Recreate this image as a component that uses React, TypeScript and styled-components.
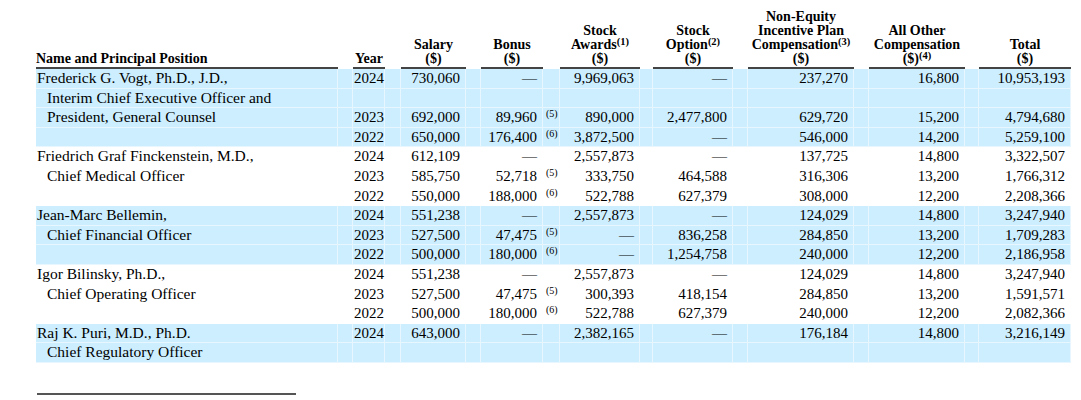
import React from 'react';
import styled, { createGlobalStyle } from 'styled-components';

const GlobalStyle = createGlobalStyle`
  html, body {
    margin: 0;
    padding: 0;
    background: #ffffff;
  }
  body {
    font-family: "Liberation Serif", "Times New Roman", serif;
    color: #000;
  }
`;

const Page = styled.div`
  padding: 10px 0 0 36px;
  width: 1035px;
  font-family: "Liberation Serif", "Times New Roman", serif;
`;

const Table = styled.table`
  width: 1035px;
  table-layout: fixed;
  border-collapse: separate;
  border-spacing: 0;
  font-family: "Liberation Serif", "Times New Roman", serif;
  font-size: 15px;
  line-height: 18.6px;
  color: #000;
`;

const HeadCell = styled.th<{ $left?: boolean; $rule?: boolean }>`
  font-family: "Liberation Serif", "Times New Roman", serif;
  font-size: 14px;
  line-height: 14px;
  font-weight: bold;
  text-align: ${p => (p.$left ? 'left' : 'center')};
  vertical-align: bottom;
  padding: 0 0 1px 0;
  border-bottom: 2px solid ${p => (p.$rule ? '#444' : 'transparent')};
  white-space: nowrap;
`;

const Sup = styled.span`
  font-size: 10.5px;
  line-height: 0;
  position: relative;
  top: -4px;
`;

const Row = styled.tr<{ $shade?: boolean }>`
  background: ${p => (p.$shade ? '#cceeff' : '#ffffff')};
`;

const Cell = styled.td<{ $align?: 'left' | 'right' | 'center'; $indent?: boolean }>`
  box-sizing: border-box;
  height: 19.6px;
  font-family: "Liberation Serif", "Times New Roman", serif;
  font-size: 15px;
  line-height: 18.6px;
  padding: 0 ${p => (p.$align === 'right' ? '5px' : '0')} 0 ${p => (p.$indent ? '11px' : '1px')};
  text-align: ${p => p.$align || 'left'};
  vertical-align: middle;
  border-right: 1px solid rgba(255, 255, 255, 0.55);
  border-bottom: 1px solid rgba(255, 255, 255, 0.55);
  white-space: nowrap;
  overflow: visible;
`;

const NameCell = styled(Cell)`
  font-size: 15.5px;
`;

const Note = styled.span`
  font-size: 10px;
  line-height: 0;
  position: relative;
  top: -5px;
  padding-left: 2px;
`;

const FootRule = styled.div`
  margin-top: 30px;
  width: 259px;
  height: 2px;
  background: #555;
  margin-left: 1px;
`;

const widths = [302, 15, 32, 16, 65, 15, 62, 17, 80, 13, 80, 15, 106, 15, 96, 14, 92];

type Line = {
  label?: string;
  indent?: boolean;
  year?: string;
  salary?: string;
  bonus?: string;
  note?: string;
  awards?: string;
  option?: string;
  nonEq?: string;
  other?: string;
  total?: string;
};

type Person = { shade: boolean; lines: Line[] };

const people: Person[] = [
  {
    shade: true,
    lines: [
      { label: 'Frederick G. Vogt, Ph.D., J.D.,', year: '2024', salary: '730,060', bonus: '—', awards: '9,969,063', option: '—', nonEq: '237,270', other: '16,800', total: '10,953,193' },
      { label: 'Interim Chief Executive Officer and', indent: true },
      { label: 'President, General Counsel', indent: true, year: '2023', salary: '692,000', bonus: '89,960', note: '(5)', awards: '890,000', option: '2,477,800', nonEq: '629,720', other: '15,200', total: '4,794,680' },
      { year: '2022', salary: '650,000', bonus: '176,400', note: '(6)', awards: '3,872,500', option: '—', nonEq: '546,000', other: '14,200', total: '5,259,100' },
    ],
  },
  {
    shade: false,
    lines: [
      { label: 'Friedrich Graf Finckenstein, M.D.,', year: '2024', salary: '612,109', bonus: '—', awards: '2,557,873', option: '—', nonEq: '137,725', other: '14,800', total: '3,322,507' },
      { label: 'Chief Medical Officer', indent: true, year: '2023', salary: '585,750', bonus: '52,718', note: '(5)', awards: '333,750', option: '464,588', nonEq: '316,306', other: '13,200', total: '1,766,312' },
      { year: '2022', salary: '550,000', bonus: '188,000', note: '(6)', awards: '522,788', option: '627,379', nonEq: '308,000', other: '12,200', total: '2,208,366' },
    ],
  },
  {
    shade: true,
    lines: [
      { label: 'Jean-Marc Bellemin,', year: '2024', salary: '551,238', bonus: '—', awards: '2,557,873', option: '—', nonEq: '124,029', other: '14,800', total: '3,247,940' },
      { label: 'Chief Financial Officer', indent: true, year: '2023', salary: '527,500', bonus: '47,475', note: '(5)', awards: '—', option: '836,258', nonEq: '284,850', other: '13,200', total: '1,709,283' },
      { year: '2022', salary: '500,000', bonus: '180,000', note: '(6)', awards: '—', option: '1,254,758', nonEq: '240,000', other: '12,200', total: '2,186,958' },
    ],
  },
  {
    shade: false,
    lines: [
      { label: 'Igor Bilinsky, Ph.D.,', year: '2024', salary: '551,238', bonus: '—', awards: '2,557,873', option: '—', nonEq: '124,029', other: '14,800', total: '3,247,940' },
      { label: 'Chief Operating Officer', indent: true, year: '2023', salary: '527,500', bonus: '47,475', note: '(5)', awards: '300,393', option: '418,154', nonEq: '284,850', other: '13,200', total: '1,591,571' },
      { year: '2022', salary: '500,000', bonus: '180,000', note: '(6)', awards: '522,788', option: '627,379', nonEq: '240,000', other: '12,200', total: '2,082,366' },
    ],
  },
  {
    shade: true,
    lines: [
      { label: 'Raj K. Puri, M.D., Ph.D.', year: '2024', salary: '643,000', bonus: '—', awards: '2,382,165', option: '—', nonEq: '176,184', other: '14,800', total: '3,216,149' },
      { label: 'Chief Regulatory Officer', indent: true },
    ],
  },
];

const App: React.FC = () => {
  return (
    <Page>
      <GlobalStyle />
      <Table>
        <colgroup>
          {widths.map((w, i) => (
            <col key={i} style={{ width: w }} />
          ))}
        </colgroup>
        <thead>
          <tr>
            <HeadCell $left $rule>Name and Principal Position</HeadCell>
            <HeadCell />
            <HeadCell $rule>Year</HeadCell>
            <HeadCell />
            <HeadCell $rule>Salary<br />($)</HeadCell>
            <HeadCell />
            <HeadCell $rule>Bonus<br />($)</HeadCell>
            <HeadCell />
            <HeadCell $rule>Stock<br />Awards<Sup>(1)</Sup><br />($)</HeadCell>
            <HeadCell />
            <HeadCell $rule>Stock<br />Option<Sup>(2)</Sup><br />($)</HeadCell>
            <HeadCell />
            <HeadCell $rule>Non-Equity<br />Incentive Plan<br />Compensation<Sup>(3)</Sup><br />($)</HeadCell>
            <HeadCell />
            <HeadCell $rule>All Other<br />Compensation<br />($)<Sup>(4)</Sup></HeadCell>
            <HeadCell />
            <HeadCell $rule>Total<br />($)</HeadCell>
          </tr>
        </thead>
        <tbody>
          {people.map((person, pi) =>
            person.lines.map((l, li) => (
              <Row key={`${pi}-${li}`} $shade={person.shade}>
                <NameCell $indent={l.indent}>{l.label}</NameCell>
                <Cell />
                <Cell $align="center">{l.year}</Cell>
                <Cell />
                <Cell $align="right">{l.salary}</Cell>
                <Cell />
                <Cell $align="right">{l.bonus}</Cell>
                <Cell>{l.note && <Note>{l.note}</Note>}</Cell>
                <Cell $align="right">{l.awards}</Cell>
                <Cell />
                <Cell $align="right">{l.option}</Cell>
                <Cell />
                <Cell $align="right">{l.nonEq}</Cell>
                <Cell />
                <Cell $align="right">{l.other}</Cell>
                <Cell />
                <Cell $align="right">{l.total}</Cell>
              </Row>
            ))
          )}
        </tbody>
      </Table>
      <FootRule />
    </Page>
  );
};

export default App;
